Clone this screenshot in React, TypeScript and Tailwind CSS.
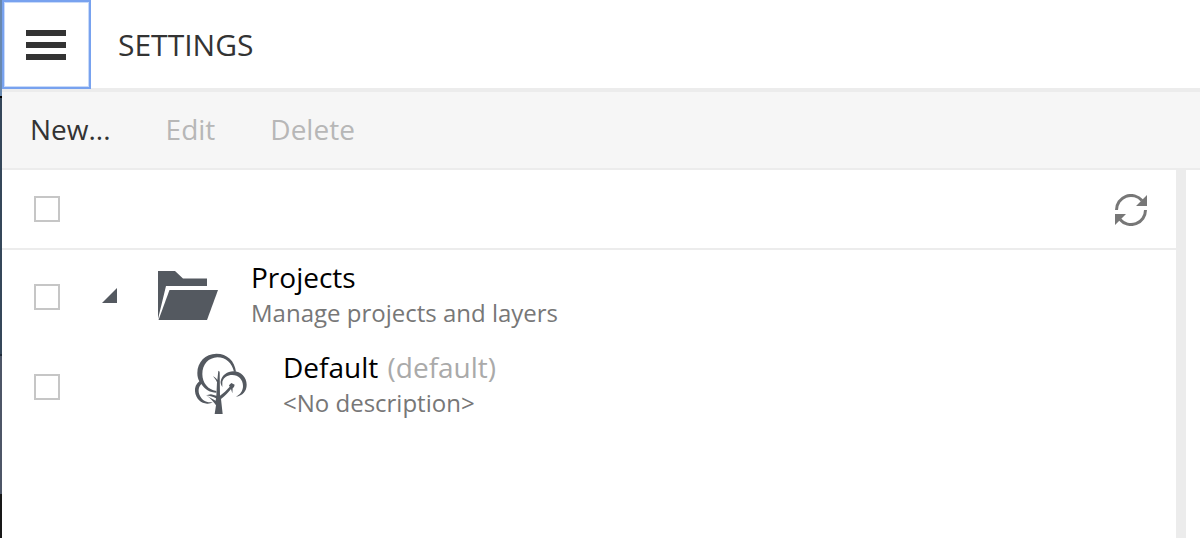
import type { ReactNode } from 'react';

function FolderIcon() {
  return (
    <svg viewBox="0 0 60 49" className="h-[49px] w-[60px] fill-[#545960]" aria-hidden="true">
      <path d="M0 0H17L25 7.500H49V15H8L0 48Z" />
      <path d="M11.500 19H60L49 49H0.500Z" />
    </svg>
  );
}

function TreeIcon() {
  return (
    <svg viewBox="36 36 168 192" className="h-16 w-14 fill-[#545960]" aria-hidden="true">
      <path d="M168 95C164 63 142 41 109 41C76 41 52 66 52 99C52 109 54 117 58 124C48 132 44 142 45 154C47 177 65 192 83 191C89 191 94 189 98 186C82 190 66 182 59 166C54 154 55 141 64 132C75 149 91 158 109 158V153C84 149 67 129 67 102C67 73 86 53 112 52C138 52 156 69 162 95Z" />
      <path d="M122 124C126 105 142 94 160 94C183 94 200 112 200 134C200 153 188 167 168 170C181 164 189 152 189 138C189 119 175 105 157 105C142 105 131 112 127 125V141C123 136 121 129 122 124Z" />
      <path d="M115 92L119 95L120 167C130 160 140 150 149 140L147 136L154 129L164 134L162 141L158 145L157 160L153 147C145 157 136 167 123 177L128 222H104L108 196C101 185 92 175 80 167L107 182L108 175C100 171 91 168 78 166L93 163L109 167L111 127C109 121 104 115 99 109C105 112 110 116 112 120Z" />
    </svg>
  );
}

function RefreshIcon() {
  return (
    <svg viewBox="0 0 32 32" className="size-8" aria-hidden="true">
      <path d="M1.500 16A14.500 14.500 0 0 1 27 6.500M30.500 16A14.500 14.500 0 0 1 5 25.500" fill="none" stroke="#777" strokeWidth="3" />
      <path d="M32 1V12H21ZM0 31V20H11Z" fill="#777" />
    </svg>
  );
}

function Checkbox({ label }: { label: string }) {
  return (
    <input
      type="checkbox"
      aria-label={label}
      className="size-[26px] shrink-0 appearance-none border-2 border-[#c6c6c6] bg-white checked:bg-[#545960]"
    />
  );
}

function Label({ title, note, detail }: { title: string; note?: string; detail: string }) {
  return (
    <div className="min-w-0 leading-9">
      <div className="text-[28px] leading-9 text-black">
        {title}
        {note && <span className="ml-0.5 text-[#aaa]"> {note}</span>}
      </div>
      <div className="text-2xl leading-9 text-[#777]">{detail}</div>
    </div>
  );
}

function Action({ children, disabled }: { children: ReactNode; disabled?: boolean }) {
  return (
    <button type="button" disabled={disabled} className="text-[#333] disabled:text-[#b7b7b7]">
      {children}
    </button>
  );
}

export default function App() {
  return (
    <div className="flex min-h-screen bg-white font-['Open_Sans',sans-serif]">
      <div className="flex w-0.5 shrink-0 flex-col">
        <div className="h-24 bg-[#6888ae]" />
        <div className="h-0.5 bg-black" />
        <div className="h-64 bg-[#35475a]" />
        <div className="h-0.5 bg-[#202d3b]" />
        <div className="h-[138px] bg-[#4d5667]" />
        <div className="grow bg-[#181818]" />
      </div>
      <div className="flex min-w-0 grow flex-col">
        <header className="flex h-[92px] shrink-0 items-start border-b-4 border-[#ececec]">
          <button
            type="button"
            aria-label="Menu"
            className="-mb-px flex h-[89px] w-[89px] shrink-0 items-center justify-center border-2 border-[#78a2ef] bg-white pr-0.5 shadow-[inset_0_0_0_1px_#c8daf9]"
          >
            <svg viewBox="0 0 40 30" className="h-[30px] w-10 fill-[#333]" aria-hidden="true">
              <path d="M0 0H40V6H0ZM0 12H40V18H0ZM0 24H40V30H0Z" />
            </svg>
          </button>
          <h1 className="pl-[27px] text-[30px] leading-[90px] text-[#333]">SETTINGS</h1>
        </header>
        <nav className="flex h-[78px] shrink-0 items-center gap-[55px] border-b-2 border-[#ececec] bg-[#f6f6f6] px-7 pb-0.5 text-[28px]">
          <Action>New...</Action>
          <Action disabled>Edit</Action>
          <Action disabled>Delete</Action>
        </nav>
        <div className="flex grow">
          <main className="min-w-0 grow">
            <div className="flex h-20 items-center justify-between border-b-2 border-[#ececec] pr-[29px] pl-8">
              <Checkbox label="Select all" />
              <button type="button" aria-label="Refresh" className="pt-0.5">
                <RefreshIcon />
              </button>
            </div>
            <ul>
              <li className="flex h-[90px] items-center pl-8">
                <div className="flex pt-1">
                  <Checkbox label="Select Projects" />
                </div>
                <button type="button" aria-label="Collapse Projects" className="ml-[42px]">
                  <svg viewBox="0 0 15 15" className="size-[15px] fill-[#545960]" aria-hidden="true">
                    <path d="M15 0V15H0Z" />
                  </svg>
                </button>
                <div className="mr-[33px] ml-[41px]">
                  <FolderIcon />
                </div>
                <Label title="Projects" detail="Manage projects and layers" />
              </li>
              <li className="flex h-[90px] items-center pl-8">
                <div className="flex pt-1">
                  <Checkbox label="Select Default" />
                </div>
                <div className="mr-[35px] ml-[132px] pb-0.5">
                  <TreeIcon />
                </div>
                <Label title="Default" note="(default)" detail="<No description>" />
              </li>
            </ul>
          </main>
          <div className="w-2.5 shrink-0 bg-[#ececec]" />
          <div className="w-3.5 shrink-0 bg-white" />
        </div>
      </div>
    </div>
  );
}
